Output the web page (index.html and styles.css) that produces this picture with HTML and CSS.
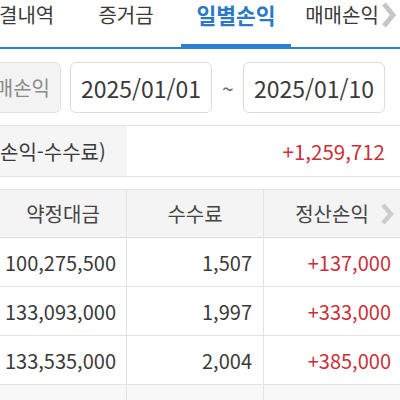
FILE: index.html
```html
<!DOCTYPE html>
<html lang="ko">
<head>
<meta charset="utf-8">
<link rel="stylesheet" href="styles.css">
</head>
<body>
<div class="page">
  <nav class="tabs">
    <div class="tab first">결내역</div>
    <div class="tab">증거금</div>
    <div class="tab active">일별손익</div>
    <div class="tab last">매매손익</div>
    <div class="tab-more"><svg width="16" height="28" viewBox="0 0 16 28"><path d="M3 3 L12 14 L3 25" fill="none" stroke="#c6c6c6" stroke-width="5" stroke-linejoin="miter"/></svg></div>
  </nav>

  <div class="dates">
    <div class="kind">매매손익</div>
    <div class="date">2025/01/01</div>
    <div class="tilde">~</div>
    <div class="date">2025/01/10</div>
  </div>

  <div class="summary">
    <div class="sum-label">손익-수수료)</div>
    <div class="sum-value">+1,259,712</div>
  </div>

  <div class="table">
    <div class="row head">
      <div class="cell c1">약정대금</div>
      <div class="cell c2">수수료</div>
      <div class="cell c3">정산손익<svg class="hchev" width="14" height="22" viewBox="0 0 14 22"><path d="M3 2 L11 11 L3 20" fill="none" stroke="#cdcdcd" stroke-width="4.5"/></svg></div>
    </div>
    <div class="row">
      <div class="cell c1">100,275,500</div>
      <div class="cell c2">1,507</div>
      <div class="cell c3 plus">+137,000</div>
    </div>
    <div class="row">
      <div class="cell c1">133,093,000</div>
      <div class="cell c2">1,997</div>
      <div class="cell c3 plus">+333,000</div>
    </div>
    <div class="row">
      <div class="cell c1">133,535,000</div>
      <div class="cell c2">2,004</div>
      <div class="cell c3 plus">+385,000</div>
    </div>
    <div class="row alt">
      <div class="cell c1"></div>
      <div class="cell c2"></div>
      <div class="cell c3"></div>
    </div>
  </div>
</div>
</body>
</html>
```

FILE: styles.css
```css
* { box-sizing: border-box; }
html, body { margin: 0; padding: 0; background: #fff; }
body {
  font-family: "Noto Sans CJK KR", "Noto Sans", sans-serif;
  color: #333;
  width: 400px;
  height: 400px;
  overflow: hidden;
}
.page { width: 400px; }

.tabs {
  position: relative;
  display: flex;
  height: 49px;
  border-bottom: 2px solid #2f7fcf;
}
.tab {
  font-size: 20px;
  line-height: 30px;
  text-align: center;
  color: #3a3a3a;
  width: 110px;
  flex: none;
  position: relative;
}
.tab.first { width: 72px; text-align: left; margin-left: -1px; }
.tab.last { margin-left: -4px; }
.tab.active {
  color: #2a78c6;
  font-weight: 700;
  font-size: 21.5px;
  width: 110px;
}
.tab.active::after {
  content: "";
  position: absolute;
  left: 0;
  right: 0;
  top: 44px;
  height: 3px;
  background: #2f7fcf;
}
.tab-more {
  position: absolute;
  right: 0;
  top: 0;
  width: 22px;
  height: 30px;
  display: flex;
  align-items: center;
  justify-content: flex-end;
  padding-right: 3px;
  background: linear-gradient(to right, rgba(255,255,255,0), #fff 35%);
}

.dates {
  display: flex;
  align-items: center;
  margin-top: 13px;
  height: 51px;
}
.kind {
  width: 62px;
  height: 51px;
  margin-left: -1px;
  background: #f3f3f3;
  border: 1px solid #e2e2e2;
  border-left: none;
  border-radius: 0 6px 6px 0;
  font-size: 20px;
  color: #8a8a8a;
  display: flex;
  align-items: center;
  justify-content: flex-end;
  padding-right: 10px;
  overflow: hidden;
  white-space: nowrap;
}
.date {
  width: 142px;
  height: 51px;
  margin-left: 9px;
  border: 1px solid #dcdcdc;
  border-radius: 6px;
  font-size: 23px;
  color: #3a3a3a;
  display: flex;
  align-items: center;
  justify-content: center;
}
.tilde {
  width: 22px;
  margin-left: 10px;
  margin-right: -10px;
  font-size: 21px;
  color: #666;
  text-align: left;
}

.summary {
  display: flex;
  margin-top: 12px;
  border-top: 1px solid #e3e3e3;
  border-bottom: 1px solid #e3e3e3;
  height: 52px;
}
.sum-label {
  width: 127px;
  background: #f5f5f5;
  font-size: 20px;
  color: #3a3a3a;
  display: flex;
  align-items: center;
  white-space: nowrap;
  overflow: hidden;
}
.sum-value {
  flex: 1;
  font-size: 20.5px;
  color: #c8323a;
  display: flex;
  align-items: center;
  justify-content: flex-end;
  padding-right: 15px;
}

.table {
  margin-top: 12px;
  border-top: 1px solid #e3e3e3;
}
.row {
  display: grid;
  grid-template-columns: 127px 137px 136px;
  height: 49px;
  border-bottom: 1px solid #e3e3e3;
}
.row.head { height: 48px; background: #f4f4f4; border-bottom: 1px solid #dcdcdc; }
.row.alt { background: #f8f8f8; }
.cell {
  display: flex;
  align-items: center;
  justify-content: flex-end;
  font-size: 20px;
  color: #3a3a3a;
  border-right: 1px solid #e3e3e3;
  padding-right: 10px;
  white-space: nowrap;
}
.cell.c3 { border-right: none; }
.cell.c2 { padding-right: 11px; }
.cell.c3 { padding-right: 9px; }
.head .cell {
  justify-content: center;
  font-size: 20px;
  padding-right: 0;
  color: #444;
}
.head .c3 { position: relative; }
.hchev { position: absolute; right: 6px; top: 13px; }
.plus { color: #c8323a; }
```
